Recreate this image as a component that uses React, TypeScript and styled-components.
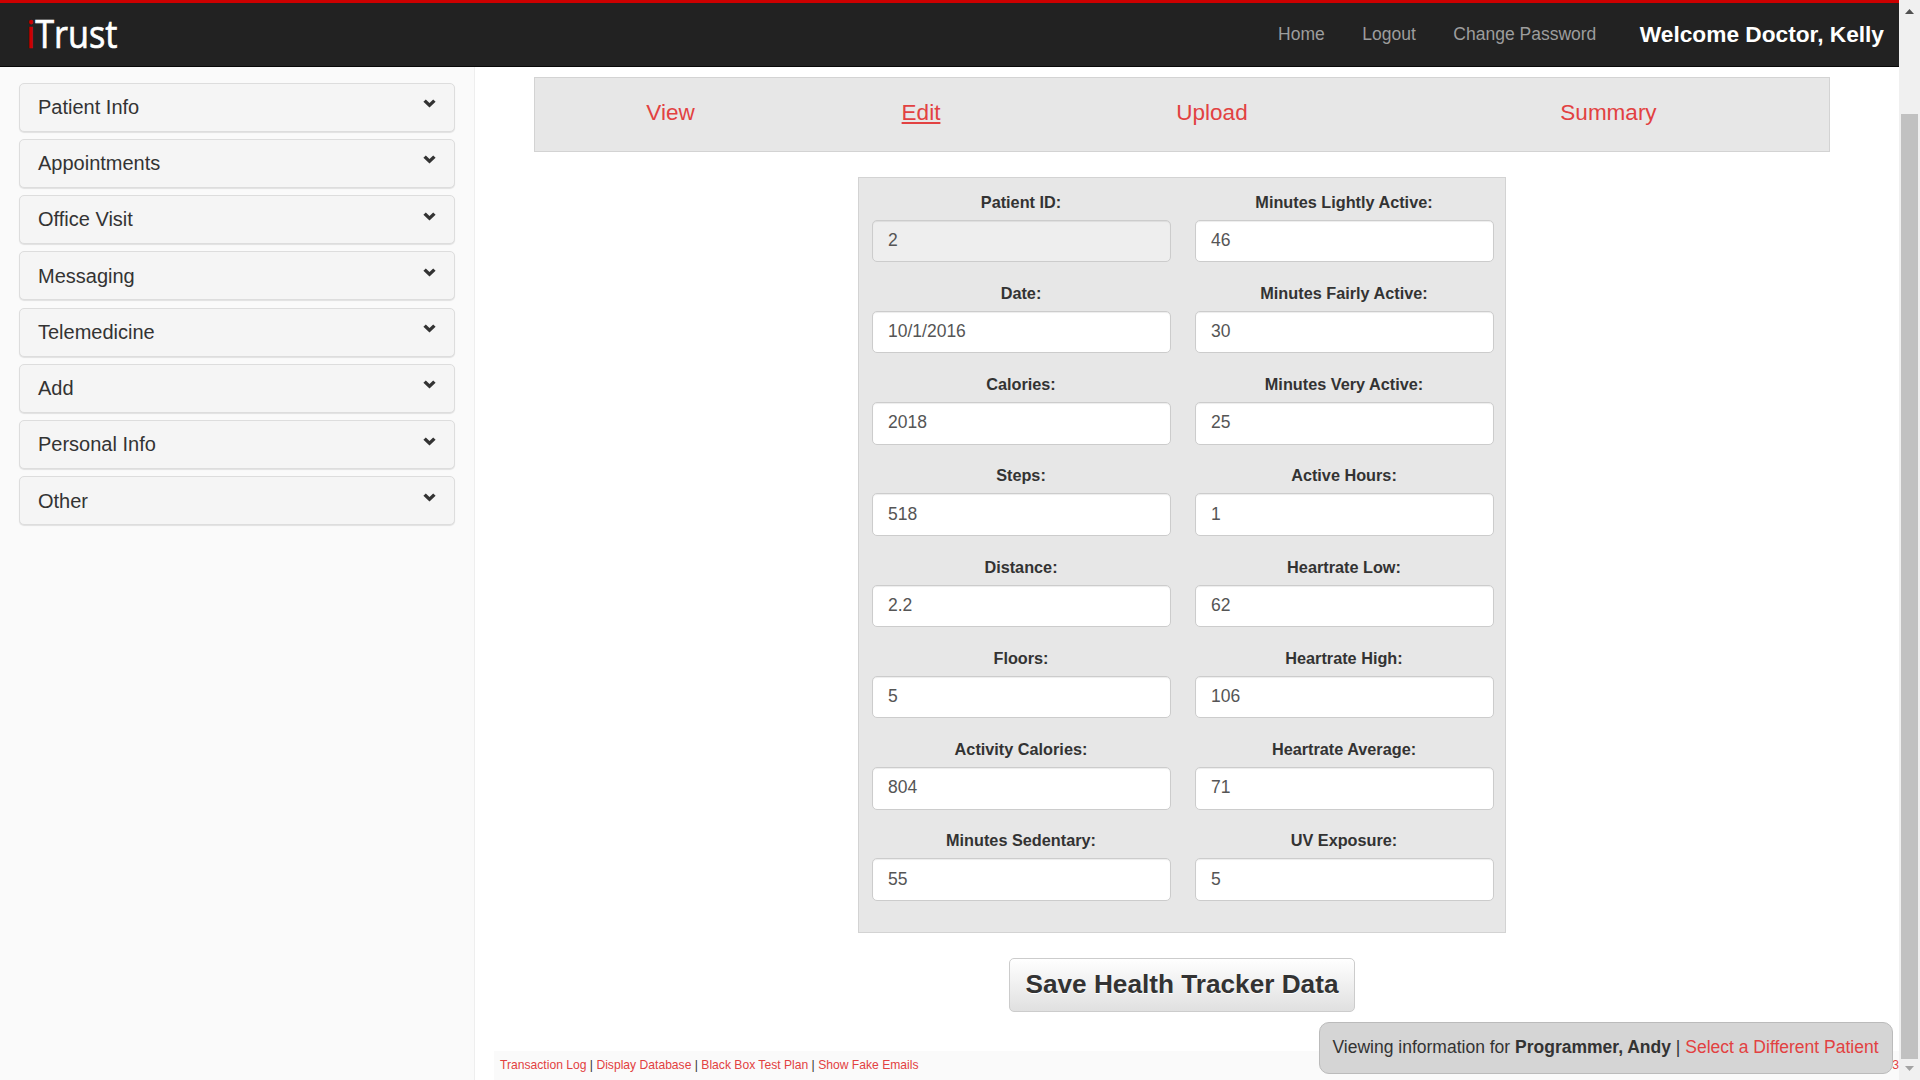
import React from "react";
import styled, { createGlobalStyle } from "styled-components";

const Global = createGlobalStyle`
  * { box-sizing: border-box; }
  body {
    margin: 0;
    background: #fff;
    color: #333;
    font-family: "Liberation Sans", Arial, sans-serif;
    font-size: 17.5px;
    line-height: 25px;
    overflow: hidden;
  }
  a { color: #e24141; text-decoration: none; }
`;

const Screen = styled.div`
  display: flex;
  width: 1920px;
  height: 1080px;
  overflow: hidden;
`;

const Page = styled.div`
  width: 1899px;
  height: 1080px;
  display: flex;
  flex-direction: column;
  position: relative;
`;

const NavBar = styled.header`
  height: 67px;
  flex: none;
  display: flex;
  align-items: flex-start;
  justify-content: space-between;
  background: #222;
  border-top: 3px solid #c00;
  border-bottom: 1px solid #080808;
`;

const Logo = styled.svg`
  display: block;
  width: 130px;
  height: 60px;
  font-family: "Open Sans", "Noto Sans", sans-serif;
`;

const NavLinks = styled.nav`
  display: flex;
  align-items: center;
  height: 62px;
  padding-right: 15px;
`;

const NavLink = styled.a`
  && { color: #9d9d9d; }
  margin-right: 37.5px;
`;

const Welcome = styled.strong`
  margin-left: 6px;
  color: #fff;
  font-size: 22.7px;
`;

const Body = styled.div`
  flex: 1;
  display: flex;
  min-height: 0;
`;

const Sidebar = styled.aside`
  width: 475px;
  flex: none;
  padding: 15.6px 19px 0 19px;
  background: #fafafa;
  border-right: 1px solid #eee;
`;

const MenuPanel = styled.div`
  display: flex;
  justify-content: space-between;
  width: 436px;
  height: 49px;
  margin-bottom: 7.25px;
  padding: 11.2px 18.5px 0 18px;
  font-size: 20px;
  background: #f5f5f5;
  border: 1px solid #ddd;
  border-radius: 5px;
  box-shadow: 0 1px 1px rgba(0, 0, 0, 0.1);
`;

const Chevron = styled.svg`
  width: 13px;
  height: 9px;
  margin-top: 4.4px;
`;

const Main = styled.main`
  flex: 1;
  display: flex;
  flex-direction: column;
  padding: 10px 0 0 19px;
`;

const Tabs = styled.nav`
  display: grid;
  grid-template-columns: 271px 230px 352px 441px;
  width: 1296px;
  height: 75px;
  margin-left: 40px;
  padding-top: 22px;
  background: #e7e7e7;
  border: 1px solid #d3d3d3;
  text-align: center;
  font-size: 22.5px;
`;

const Tab = styled.a<{ $active?: boolean }>`
  text-decoration: ${(p) => (p.$active ? "underline" : "none")};
  text-decoration-thickness: 2px;
  text-underline-offset: 2px;
`;

const FormBox = styled.form`
  display: grid;
  grid-template-columns: 299px 299px;
  grid-auto-rows: 91.25px;
  column-gap: 24px;
  width: 648px;
  height: 756px;
  margin: 25px 0 0 364px;
  padding: 11.6px 0 0 13px;
  background: #e7e7e7;
  border: 1px solid #d3d3d3;
`;

const Field = styled.label`
  display: flex;
  flex-direction: column;
  font-size: 16.25px;
  font-weight: bold;
  text-align: center;
`;

const Caption = styled.span`
  padding-right: 1px;
`;

const Input = styled.input`
  height: 42.5px;
  margin-top: 5px;
  padding: 6.5px 15px 7.5px;
  font: 17.5px "Liberation Sans", Arial, sans-serif;
  color: #555;
  background: #fff;
  border: 1px solid #ccc;
  border-radius: 5px;
  box-shadow: inset 0 1px 1px rgba(0, 0, 0, 0.075);
  outline: none;
  &:disabled { background: #eee; }
`;

const SaveButton = styled.button`
  width: 346px;
  height: 54px;
  margin: 25px 0 0 515px;
  padding: 0 0 1px;
  font: bold 26.2px "Liberation Sans", Arial, sans-serif;
  color: #333;
  text-shadow: 0 1px 0 #fff;
  white-space: nowrap;
  background: linear-gradient(#fff, #e0e0e0);
  border: 1px solid #ccc;
  border-radius: 5px;
`;

const Footer = styled.footer`
  display: flex;
  justify-content: space-between;
  height: 29px;
  margin-top: auto;
  padding: 2px 0 0 6px;
  background: #fafafa;
  font-size: 12.13px;
`;

const PatientBadge = styled.div`
  position: absolute;
  left: 1319px;
  top: 1022px;
  width: 574px;
  height: 52px;
  padding: 12px 0 0 12.5px;
  white-space: nowrap;
  background: #d5d5d5;
  border: 1px solid #bbb;
  border-radius: 10px;
`;

const ScrollTrack = styled.div`
  display: flex;
  flex-direction: column;
  align-items: center;
  width: 21px;
  height: 1080px;
  background: #f0f0f0;
`;

const ScrollThumb = styled.div`
  width: 17px;
  height: 945px;
  background: #c1c1c1;
`;

const ScrollArrow = styled.svg<{ $height: number }>`
  width: 21px;
  height: ${(p) => p.$height}px;
  flex: none;
`;

const menu = ["Patient Info", "Appointments", "Office Visit", "Messaging", "Telemedicine", "Add", "Personal Info", "Other"];
const tabs = ["View", "Edit", "Upload", "Summary"];
const fields: [string, string][] = [
  ["Patient ID:", "2"],
  ["Minutes Lightly Active:", "46"],
  ["Date:", "10/1/2016"],
  ["Minutes Fairly Active:", "30"],
  ["Calories:", "2018"],
  ["Minutes Very Active:", "25"],
  ["Steps:", "518"],
  ["Active Hours:", "1"],
  ["Distance:", "2.2"],
  ["Heartrate Low:", "62"],
  ["Floors:", "5"],
  ["Heartrate High:", "106"],
  ["Activity Calories:", "804"],
  ["Heartrate Average:", "71"],
  ["Minutes Sedentary:", "55"],
  ["UV Exposure:", "5"],
];

export default function App() {
  return (
    <Screen>
      <Global />
      <Page>
        <NavBar>
          <Logo viewBox="0 0 130 60">
            <text x="26.5" y="45" fontSize="38.5" textLength="91" lengthAdjust="spacingAndGlyphs" fill="#fff" stroke="#fff" strokeWidth="0.7">
              <tspan fill="#c00" stroke="#c00">i</tspan>Trust
            </text>
          </Logo>
          <NavLinks>
            <NavLink>Home</NavLink>
            <NavLink>Logout</NavLink>
            <NavLink>Change Password</NavLink>
            <Welcome>Welcome Doctor, Kelly</Welcome>
          </NavLinks>
        </NavBar>
        <Body>
          <Sidebar>
            {menu.map((name) => (
              <MenuPanel key={name}>
                {name}
                <Chevron viewBox="0 0 13 9">
                  <path d="M0.4 2.7 2.8 0.5 6.5 3.9 10.2 0.5 12.6 2.7 6.5 8.6Z" fill="#333" />
                </Chevron>
              </MenuPanel>
            ))}
          </Sidebar>
          <Main>
            <Tabs>
              {tabs.map((name) => (
                <div key={name}>
                  <Tab $active={name === "Edit"}>{name}</Tab>
                </div>
              ))}
            </Tabs>
            <FormBox>
              {fields.map(([label, value]) => (
                <Field key={label}>
                  <Caption>{label}</Caption>
                  <Input defaultValue={value} disabled={label === "Patient ID:"} />
                </Field>
              ))}
            </FormBox>
            <SaveButton type="button">Save Health Tracker Data</SaveButton>
            <Footer>
              <span>
                <a>Transaction Log</a> | <a>Display Database</a> | <a>Black Box Test Plan</a> | <a>Show Fake Emails</a>
              </span>
              <a>3</a>
            </Footer>
          </Main>
        </Body>
        <PatientBadge>
          Viewing information for <b>Programmer, Andy</b> | <a>Select a Different Patient</a>
        </PatientBadge>
      </Page>
      <ScrollTrack>
        <ScrollArrow $height={114} viewBox="0 0 21 114">
          <path d="M6 14 10.5 9 15 14Z" fill="#505050" />
        </ScrollArrow>
        <ScrollThumb />
        <ScrollArrow $height={21} viewBox="0 0 21 21">
          <path d="M6 7H15L10.5 12Z" fill="#a3a3a3" />
        </ScrollArrow>
      </ScrollTrack>
    </Screen>
  );
}
